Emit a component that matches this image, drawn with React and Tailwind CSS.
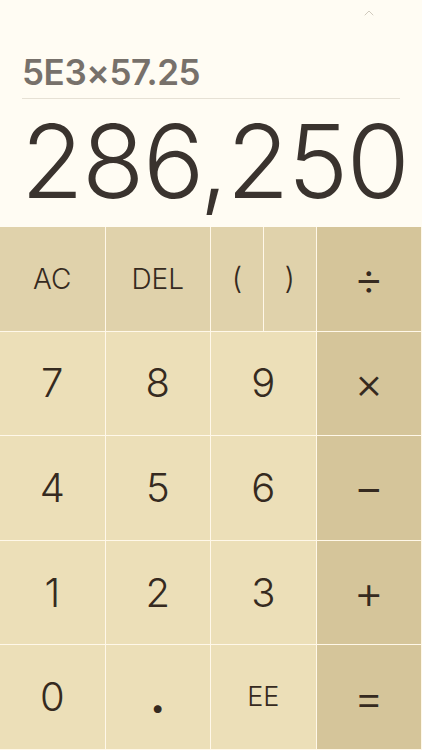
import { ChevronUp } from 'lucide-react'

const FONT = { fontFamily: 'Inter, "Noto Sans", sans-serif' }

const KEYS = [
  { label: 'AC', kind: 'fn', size: 'text-[28px]' },
  { label: 'DEL', kind: 'fn', size: 'text-[28px]' },
  { label: 'parens', kind: 'fn' },
  { label: '÷', kind: 'op', size: 'text-[46px]' },
  { label: '7', kind: 'num' },
  { label: '8', kind: 'num' },
  { label: '9', kind: 'num' },
  { label: '×', kind: 'op', size: 'text-[44px]' },
  { label: '4', kind: 'num' },
  { label: '5', kind: 'num' },
  { label: '6', kind: 'num' },
  { label: '−', kind: 'op', size: 'text-[46px]' },
  { label: '1', kind: 'num' },
  { label: '2', kind: 'num' },
  { label: '3', kind: 'num' },
  { label: '+', kind: 'op', size: 'text-[46px]' },
  { label: '0', kind: 'num' },
  { label: '.', kind: 'num', size: 'text-[46px] !font-bold pb-[2px]' },
  { label: 'EE', kind: 'num', size: 'text-[27px]' },
  { label: '=', kind: 'op', size: 'text-[46px]' },
]

const BG = {
  fn: 'bg-[#e0d2ab]',
  num: 'bg-[#ecdfb8]',
  op: 'bg-[#d5c59a]',
}

function Key({ k }) {
  if (k.label === 'parens') {
    return (
      <div className="grid grid-cols-2 gap-px">
        <button className={`${BG.fn} flex items-center justify-center text-[30px] font-light text-[#352a20]`}>(</button>
        <button className={`${BG.fn} flex items-center justify-center text-[30px] font-light text-[#352a20]`}>)</button>
      </div>
    )
  }
  return (
    <button
      className={`${BG[k.kind]} flex items-center justify-center font-light text-[#352a20] ${k.size || 'text-[40px]'}`}
    >
      {k.label}
    </button>
  )
}

export default function App() {
  return (
    <div className="w-[422px] h-[750px] flex flex-col bg-[#fffcf3] overflow-hidden" style={FONT}>
      {/* Display */}
      <div className="h-[227px] flex flex-col">
        <div className="h-[24px] flex justify-end pr-[45px] pt-[5px]">
          <ChevronUp size={16} strokeWidth={1.3} className="text-[#c9c2b4]" />
        </div>
        <div className="px-[22px] pt-[31px]">
          <div className="text-[35px] leading-none font-semibold text-[#77716b] tracking-[-0.4px]">5E3×57.25</div>
          <div className="mt-[8px] h-px bg-[#e6e1d5]" />
        </div>
        <div className="pl-[21px] pt-[11px] text-[102px] leading-none font-light text-[#3a332e] tracking-[-1.5px]">
          286,250
        </div>
      </div>

      {/* Keypad */}
      <div className="flex-1 grid grid-cols-4 grid-rows-5 gap-px bg-[#fff8e9] pr-px pb-px">
        {KEYS.map((k) => (
          <Key key={k.label} k={k} />
        ))}
      </div>
    </div>
  )
}
